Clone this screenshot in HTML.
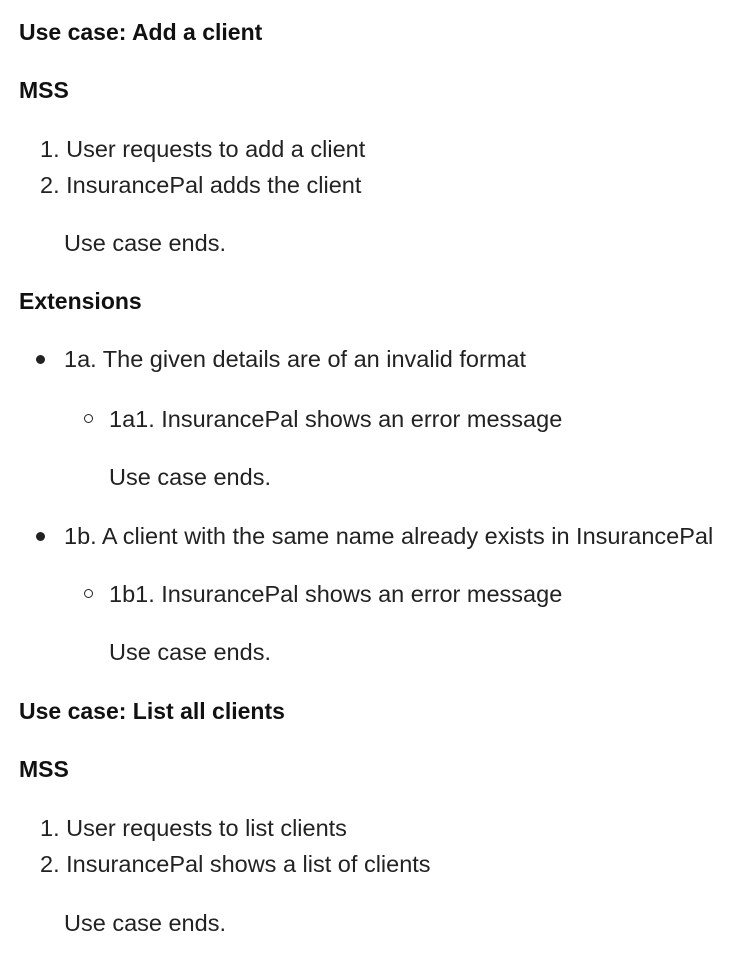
<!DOCTYPE html>
<html><head><meta charset="utf-8"><style>
body{margin:0;width:745px;height:964px;background:#fff;position:relative;font-family:"Liberation Sans","DejaVu Sans",sans-serif;font-size:23.5px;color:#222;}
.l{position:absolute;line-height:28px;white-space:nowrap;}
.b{font-weight:bold;color:#111;font-size:23px;}
.dot{position:absolute;width:9px;height:9px;border-radius:50%;background:#222;}
.circ{position:absolute;width:7px;height:7px;border-radius:50%;border:1.6px solid #222;}
</style></head><body>
<div class="l b" style="left:19px;top:18px">Use case: Add a client</div>
<div class="l b" style="left:19px;top:76px">MSS</div>
<div class="l" style="left:40px;top:135px">1. User requests to add a client</div>
<div class="l" style="left:40px;top:171px">2. InsurancePal adds the client</div>
<div class="l" style="left:64px;top:229px">Use case ends.</div>
<div class="l b" style="left:19px;top:287px">Extensions</div>
<div class="dot" style="left:36px;top:355px"></div>
<div class="l" style="left:64px;top:345px">1a. The given details are of an invalid format</div>
<div class="circ" style="left:84px;top:414px"></div>
<div class="l" style="left:109px;top:405px">1a1. InsurancePal shows an error message</div>
<div class="l" style="left:109px;top:463px">Use case ends.</div>
<div class="dot" style="left:36px;top:532px"></div>
<div class="l" style="left:64px;top:522px">1b. A client with the same name already exists in InsurancePal</div>
<div class="circ" style="left:84px;top:589px"></div>
<div class="l" style="left:109px;top:580px">1b1. InsurancePal shows an error message</div>
<div class="l" style="left:109px;top:638px">Use case ends.</div>
<div class="l b" style="left:19px;top:697px">Use case: List all clients</div>
<div class="l b" style="left:19px;top:755px">MSS</div>
<div class="l" style="left:40px;top:814px">1. User requests to list clients</div>
<div class="l" style="left:40px;top:850px">2. InsurancePal shows a list of clients</div>
<div class="l" style="left:64px;top:909px">Use case ends.</div>
</body></html>
